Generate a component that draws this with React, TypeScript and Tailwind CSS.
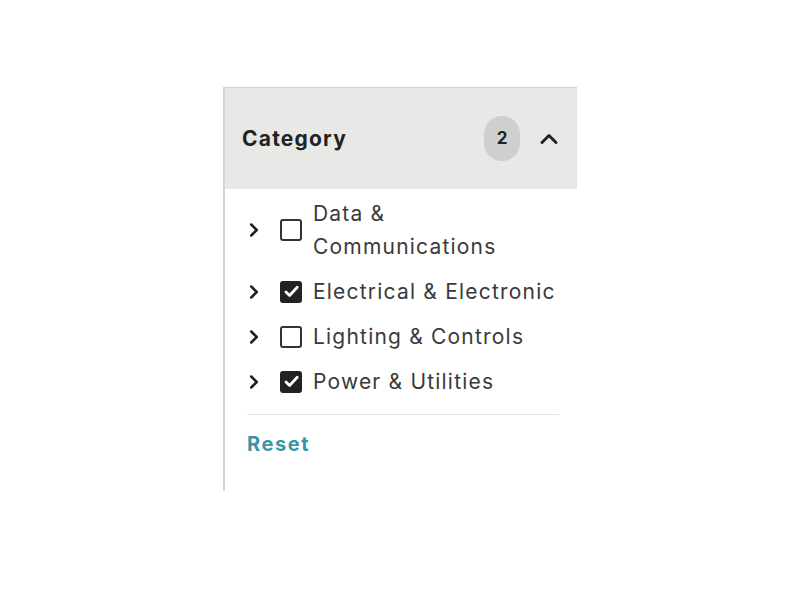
import { ChevronRight, ChevronUp } from "lucide-react";

const items = [
  { label: "Data & Communications", checked: false },
  { label: "Electrical & Electronic", checked: true },
  { label: "Lighting & Controls", checked: false },
  { label: "Power & Utilities", checked: true },
];

function Checkbox({ checked }: { checked: boolean }) {
  return checked ? (
    <span className="flex h-[22px] w-[22px] shrink-0 items-center justify-center rounded-[3px] bg-[#222222]">
      <svg viewBox="0 0 16 16" className="h-[17px] w-[17px]" fill="none">
        <path d="M2.8 8.4l3.4 3.4L13.4 4" stroke="white" strokeWidth="2.6" strokeLinecap="round" strokeLinejoin="round" />
      </svg>
    </span>
  ) : (
    <span className="block h-[22px] w-[22px] shrink-0 rounded-[3px] border-2 border-[#333333] bg-white" />
  );
}

export default function App() {
  return (
    <div className="min-h-[600px] w-[800px] bg-white pl-[223px] pt-[87px] font-['Inter','Liberation_Sans',sans-serif]">
      <div className="h-[404px] w-[354px] border-l-2 border-t border-[#d4d4d4]">
        <div className="flex h-[101px] items-center bg-[#e8e8e7] pl-[17px] pr-[14px]">
          <h3 className="flex-1 text-[21px] font-bold tracking-[1.2px] text-[#222222]">Category</h3>
          <span className="flex h-[45px] w-[36px] items-center justify-center rounded-full bg-[#cfcfce] text-[17px] font-bold text-[#222222]">
            2
          </span>
          <ChevronUp className="ml-[15px] h-[28px] w-[28px] text-[#222222]" strokeWidth={2.5} />
        </div>
        <div className="pl-[22px] pr-[18px] pt-[8px]">
          <ul className="flex flex-col gap-[12px]">
            {items.map((item) => (
              <li key={item.label} className="flex items-center">
                <ChevronRight className="-ml-[4px] h-[22px] w-[22px] shrink-0 text-[#222222]" strokeWidth={2.8} />
                <span className="ml-[15px] flex">
                  <Checkbox checked={item.checked} />
                </span>
                <span className="ml-[11px] w-[262px] text-[21px] leading-[33px] tracking-[1.2px] text-[#3a3a3a]">
                  {item.label === "Data & Communications" ? (
                    <>
                      Data &<br />
                      Communications
                    </>
                  ) : (
                    item.label
                  )}
                </span>
              </li>
            ))}
          </ul>
          <div className="mt-[16px] border-t border-[#e2e2e2]" />
          <button className="mt-[14px] text-[20px] font-bold tracking-[1.6px] text-[#3a95a7]">Reset</button>
        </div>
      </div>
    </div>
  );
}
